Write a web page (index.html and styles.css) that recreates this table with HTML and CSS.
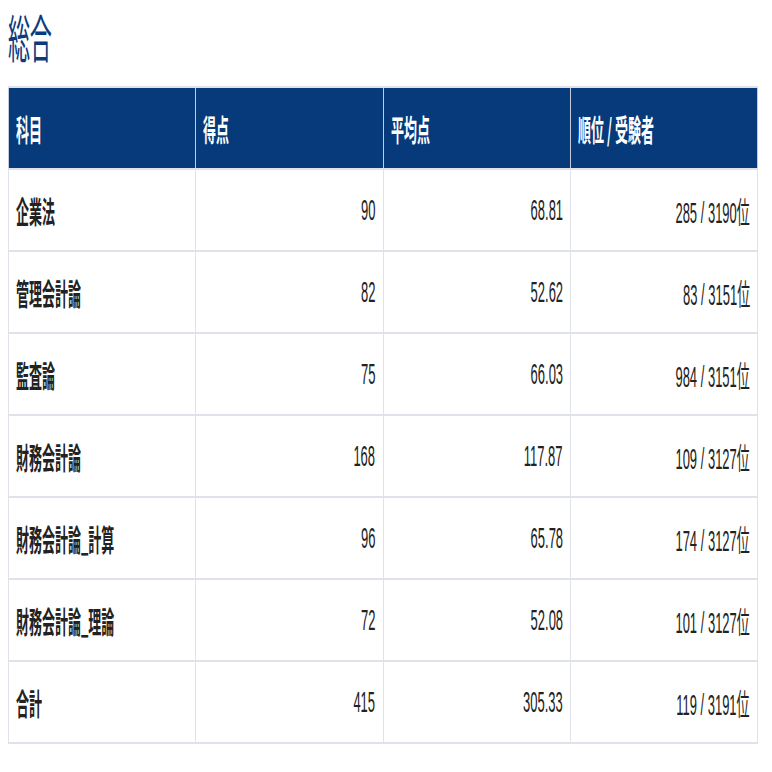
FILE: index.html
```html
<!DOCTYPE html>
<html lang="ja">
<head>
<meta charset="utf-8">
<title>総合</title>
<link rel="stylesheet" href="styles.css">
</head>
<body>
  <h1 class="title"><span class="sq">総合</span></h1>
  <table class="scores">
    <thead>
      <tr><th><span class="sq">科目</span></th><th><span class="sq">得点</span></th><th><span class="sq">平均点</span></th><th><span class="sq">順位 / 受験者</span></th></tr>
    </thead>
    <tbody>
      <tr><td class="subj"><span class="sq">企業法</span></td><td><span class="sq">90</span></td><td><span class="sq">68.81</span></td><td><span class="sq">285 / 3190位</span></td></tr>
      <tr><td class="subj"><span class="sq">管理会計論</span></td><td><span class="sq">82</span></td><td><span class="sq">52.62</span></td><td><span class="sq">83 / 3151位</span></td></tr>
      <tr><td class="subj"><span class="sq">監査論</span></td><td><span class="sq">75</span></td><td><span class="sq">66.03</span></td><td><span class="sq">984 / 3151位</span></td></tr>
      <tr><td class="subj"><span class="sq">財務会計論</span></td><td><span class="sq">168</span></td><td><span class="sq">117.87</span></td><td><span class="sq">109 / 3127位</span></td></tr>
      <tr><td class="subj"><span class="sq">財務会計論_計算</span></td><td><span class="sq">96</span></td><td><span class="sq">65.78</span></td><td><span class="sq">174 / 3127位</span></td></tr>
      <tr><td class="subj"><span class="sq">財務会計論_理論</span></td><td><span class="sq">72</span></td><td><span class="sq">52.08</span></td><td><span class="sq">101 / 3127位</span></td></tr>
      <tr><td class="subj"><span class="sq">合計</span></td><td><span class="sq">415</span></td><td><span class="sq">305.33</span></td><td><span class="sq">119 / 3191位</span></td></tr>
    </tbody>
  </table>
</body>
</html>
```
FILE: styles.css
```css
html, body {
  margin: 0;
  padding: 0;
  background: #ffffff;
}
body {
  padding: 8px 14px 8px 8px;
  font-family: "Liberation Sans", "Noto Sans CJK JP", sans-serif;
}
.sq {
  display: inline-block;
  white-space: nowrap;
  transform: scaleX(0.433);
  transform-origin: 0 50%;
}
.title {
  margin: 0 0 22px 0;
  height: 56px;
  font-size: 51px;
  line-height: 56px;
  font-weight: 400;
  color: #0b3b7c;
  font-family: "Noto Sans CJK JP", sans-serif;
  overflow: visible;
}
.title .sq {
  letter-spacing: -1px;
}
.scores {
  width: 750px;
  table-layout: fixed;
  border-collapse: collapse;
  font-size: 30px;
}
.scores th,
.scores td {
  height: 80px;
  padding: 0 7px 0 7px;
  border-style: solid;
  border-color: #dfe3e9;
  border-width: 2px 1px;
  vertical-align: middle;
  overflow: visible;
  white-space: nowrap;
}
.scores th {
  background: #063a7a;
  color: #ffffff;
  text-align: left;
  font-weight: 700;
  font-family: "Noto Sans CJK JP", sans-serif;
  border-color: #dfe3e9 #c3cbd8;
}
.scores td {
  text-align: right;
  color: #222222;
  font-weight: 400;
}
.scores td .sq {
  transform-origin: 100% 50%;
}
.scores td.subj {
  text-align: left;
  font-weight: 700;
  font-family: "Noto Sans CJK JP", sans-serif;
}
.scores td.subj .sq {
  transform-origin: 0 50%;
}
```
